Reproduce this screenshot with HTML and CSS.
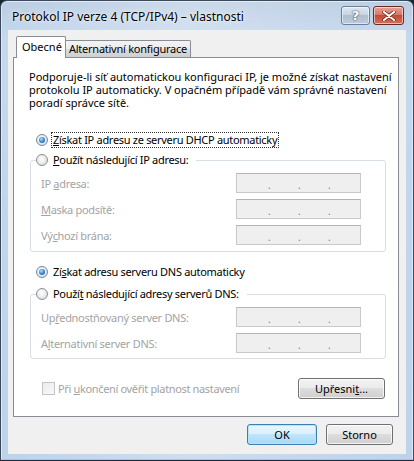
FILE: index.html
```html
<!DOCTYPE html>
<html lang="cs">
<head>
<meta charset="utf-8">
<title>Protokol IP verze 4 (TCP/IPv4) – vlastnosti</title>
<link rel="stylesheet" href="styles.css">
</head>
<body>
<div class="window">
  <div class="titlebar">
    <span class="title">Protokol IP verze 4 (TCP/IPv4) – vlastnosti</span>
    <div class="caption-btns">
      <div class="cap help">?</div>
      <div class="cap close">
        <svg width="14" height="10" viewBox="0 0 14 10"><path d="M2 1 L12 9 M12 1 L2 9" stroke="#5a1a12" stroke-width="3.4" stroke-linecap="round"/><path d="M2 1 L12 9 M12 1 L2 9" stroke="#fff" stroke-width="2.2" stroke-linecap="round"/></svg>
      </div>
    </div>
  </div>
  <div class="client">
    <div class="tabs">
      <div class="tab selected">Obecné</div>
      <div class="tab">Alternativní konfigurace</div>
    </div>
    <div class="panel">
      <div class="intro">
        <span class="line">Podporuje-li síť automatickou konfiguraci IP, je možné získat nastavení</span>
        <span class="line">protokolu IP automaticky. V opačném případě vám správné nastavení</span>
        <span class="line">poradí správce sítě.</span>
      </div>

      <div class="radio-row first">
        <span class="radio checked"><span class="dot"></span></span>
        <span class="label focus"><u>Z</u>ískat IP adresu ze serveru DHCP automaticky</span>
      </div>

      <fieldset class="group g1">
        <legend class="radio-row legend">
          <span class="radio"></span>
          <span class="label"><u>P</u>oužít následující IP adresu:</span>
        </legend>
        <div class="fields">
          <span class="flabel">IP <u>a</u>dresa:</span><span class="ipbox"><i>.</i><i>.</i><i>.</i></span>
          <span class="flabel"><u>M</u>aska podsítě:</span><span class="ipbox"><i>.</i><i>.</i><i>.</i></span>
          <span class="flabel">Vý<u>c</u>hozí brána:</span><span class="ipbox"><i>.</i><i>.</i><i>.</i></span>
        </div>
      </fieldset>

      <div class="radio-row dns">
        <span class="radio checked"><span class="dot"></span></span>
        <span class="label">Zí<u>s</u>kat adresu serveru DNS automaticky</span>
      </div>

      <fieldset class="group g2">
        <legend class="radio-row legend">
          <span class="radio"></span>
          <span class="label">Použí<u>t</u> následující adresy serverů DNS:</span>
        </legend>
        <div class="fields">
          <span class="flabel">Up<u>ř</u>ednostňovaný server DNS:</span><span class="ipbox"><i>.</i><i>.</i><i>.</i></span>
          <span class="flabel">A<u>l</u>ternativní server DNS:</span><span class="ipbox"><i>.</i><i>.</i><i>.</i></span>
        </div>
      </fieldset>

      <div class="bottom-row">
        <div class="check-row">
          <span class="checkbox"></span>
          <span class="dis">Při <u>u</u>končení ověřit platnost nastavení</span>
        </div>
        <div class="btn advanced">Upřesni<u>t</u>...</div>
      </div>
    </div>
    <div class="footer">
      <div class="btn default">OK</div>
      <div class="btn cancel">Storno</div>
    </div>
  </div>
</div>
</body>
</html>
```

FILE: styles.css
```css
* { box-sizing: border-box; }
html, body { margin: 0; padding: 0; }
body {
  background: #1b2633;
  font-family: "Noto Sans", "Open Sans", sans-serif;
  font-size: 11px;
  color: #000;
}
u { text-decoration: underline; text-underline-offset: 1px; }

.window {
  width: 414px;
  height: 461px;
  border: 1px solid #3a4a5c;
  border-bottom-color: #1f2a36;
  border-radius: 7px 7px 0 0;
  background:
    linear-gradient(to right, rgba(255,255,255,0) 0%, rgba(255,255,255,0.25) 45%, rgba(255,255,255,0) 100%),
    linear-gradient(to bottom, #b9cde3 0%, #c6d8ec 8%, #bcd3ea 100%);
  padding: 0 7px 6px 7px;
  display: flex;
  flex-direction: column;
  box-shadow: inset 0 -1px 0 #8fd0ea, inset 1px 0 0 #dbe8f5, inset -1px 0 0 #dbe8f5, inset 0 1px 0 #e3edf7;
}

.titlebar {
  height: 29px;
  display: flex;
  align-items: flex-start;
  justify-content: space-between;
}
.title {
  margin: 8px 0 0 4px;
  font-size: 12px;
  line-height: 16px;
  color: #000;
  text-shadow: 0 0 6px rgba(255,255,255,0.9), 0 0 2px rgba(255,255,255,0.9);
}
.caption-btns {
  display: flex;
  margin-top: 5px;
  margin-right: 2px;
  gap: 3px;
}
.cap {
  height: 19px;
  border: 1px solid #6b7f95;
  border-radius: 3px;
  display: flex;
  align-items: center;
  justify-content: center;
  box-shadow: inset 0 0 0 1px rgba(255,255,255,0.55);
}
.help {
  width: 29px;
  background: linear-gradient(to bottom, #dfe8f2 0%, #c6d4e3 45%, #aebfd2 50%, #bccbdc 100%);
  color: #fff;
  font-family: "DejaVu Sans", sans-serif;
  font-size: 13px;
  font-weight: bold;
  text-shadow: 0 0 1px #3d4e61, 0 0 2px #3d4e61;
}
.close {
  width: 31px;
  border-color: #6a2a22;
  background: linear-gradient(to bottom, #e8a397 0%, #d47869 45%, #c24a35 50%, #d0715a 100%);
}

.client {
  flex: 1;
  background: #f0f0f0;
  padding: 0 7px 0 5px;
  display: flex;
  flex-direction: column;
}

.tabs {
  height: 27px;
  display: flex;
  align-items: flex-end;
  padding-left: 3px;
}
.tab {
  height: 17px;
  border: 1px solid #898c95;
  border-bottom: none;
  border-left: none;
  padding: 0 3px 0 3px;
  line-height: 16px;
  letter-spacing: -0.25px;
  background: linear-gradient(to bottom, #f4f4f4 0%, #ebebeb 50%, #dddddd 51%, #cfcfcf 100%);
  border-radius: 0 2px 0 0;
}
.tab.selected {
  height: 22px;
  width: 50px;
  border-left: 1px solid #898c95;
  background: #fff;
  margin-bottom: -1px;
  position: relative;
  z-index: 1;
  padding: 2px 0 0 5px;
  letter-spacing: 0;
  border-radius: 2px 2px 0 0;
}

.panel {
  height: 360px;
  background: #fff;
  border: 1px solid #898c95;
  padding: 0;
}
.intro {
  margin: 12px 0 0 15px;
  display: flex;
  flex-direction: column;
}
.intro .line {
  display: block;
  height: 13px;
  line-height: 13px;
  white-space: nowrap;
}

.radio-row {
  display: flex;
  align-items: center;
  height: 16px;
}
.radio-row.first { margin: 23px 0 0 22px; }
.radio-row.dns { margin: 12px 0 0 22px; }
.radio {
  width: 12px;
  height: 12px;
  border-radius: 50%;
  border: 1px solid #8b8f94;
  background: radial-gradient(circle at 45% 40%, #ffffff 0%, #f0f0f0 40%, #cfd3d6 100%);
  display: flex;
  align-items: center;
  justify-content: center;
  margin-right: 4px;
  flex: none;
}
.radio.checked { border-color: #6f8aa7; }
.dot {
  width: 6px;
  height: 6px;
  border-radius: 50%;
  background: radial-gradient(circle at 40% 35%, #b9e4ff 0%, #3d8fd8 45%, #1d4f96 100%);
}
.label { line-height: 14px; padding: 0 1px; letter-spacing: -0.3px; }
.label.focus { outline: 1px dotted #333; outline-offset: 0; }

.group {
  margin: 4px 0 0 16px;
  width: 356px;
  border: 1px solid #d5dfe5;
  border-radius: 3px;
  padding: 0 0 5px 0;
  min-width: 0;
}
.group.g1 { padding-bottom: 6px; }
.group.g2 { margin-top: 6px; }
.legend {
  margin-left: 5px;
  padding: 0 7px 0 0;
}

.fields {
  margin-top: 5px;
  padding-left: 10px;
  display: grid;
  grid-template-columns: 195px 125px;
  row-gap: 6px;
  align-items: center;
}
.flabel { color: #a3a3a3; letter-spacing: -0.3px; }
.ipbox {
  height: 20px;
  border: 1px solid #c9c9c9;
  border-top-color: #b4b4b4;
  background: #efefef;
  display: flex;
  align-items: center;
  padding-left: 31px;
  gap: 0;
  color: #7d7d7d;
  font-size: 10px;
  line-height: 10px;
}
.ipbox i { font-style: normal; width: 30px; padding-top: 4px; }

.bottom-row {
  margin: 19px 13px 0 28px;
  display: flex;
  align-items: center;
  justify-content: space-between;
  height: 21px;
}
.check-row { display: flex; align-items: center; }
.checkbox {
  width: 13px;
  height: 13px;
  border: 1px solid #c4c4c4;
  background: linear-gradient(135deg, #ececec, #f8f8f8);
  margin-right: 3px;
}
.dis { color: #a3a3a3; letter-spacing: -0.35px; }

.btn {
  height: 21px;
  border: 1px solid #707070;
  border-radius: 3px;
  background: linear-gradient(to bottom, #f2f2f2 0%, #ebebeb 49%, #dddddd 50%, #cfcfcf 100%);
  box-shadow: inset 0 0 0 1px rgba(255,255,255,0.75);
  display: flex;
  align-items: center;
  justify-content: center;
  line-height: 14px;
}
.advanced { width: 87px; }

.footer {
  margin-top: 7px;
  display: flex;
  justify-content: flex-end;
  gap: 9px;
  padding-right: 6px;
}
.default {
  width: 70px;
  border-color: #3c7fb1;
  box-shadow: inset 0 0 0 1px #b6e4f8;
  background: linear-gradient(to bottom, #eaf6fd 0%, #d9f0fc 49%, #bee6fd 50%, #a7d9f5 100%);
}
.cancel { width: 67px; }
```
